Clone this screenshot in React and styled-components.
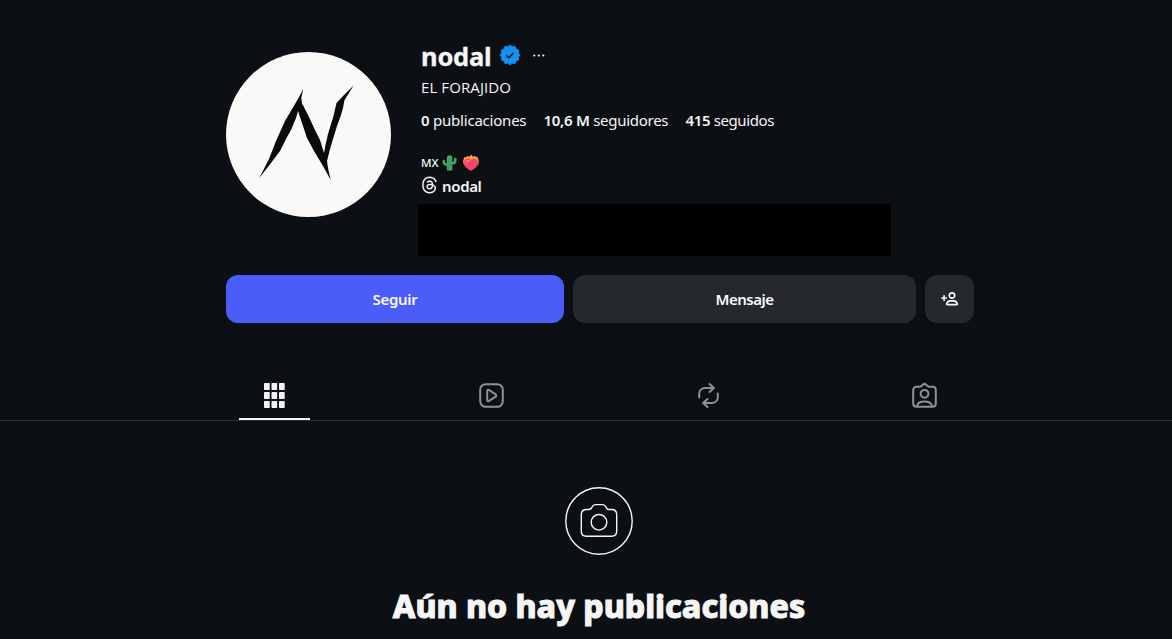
import React from "react";
import styled, { createGlobalStyle } from "styled-components";
import { FaThreads } from "react-icons/fa6";

const GlobalStyle = createGlobalStyle`
  * { box-sizing: border-box; }
  body {
    margin: 0;
    background: #0c1014;
    color: #f5f5f5;
    font-family: "Noto Sans", "Open Sans", sans-serif;
    overflow: hidden;
  }
`;

const Page = styled.main`
  width: 1172px;
  height: 639px;
  overflow: hidden;
`;
const Profile = styled.header`
  display: flex;
  height: 275px;
  padding: 0 0 0 226px;
`;
const Avatar = styled.svg`
  width: 165px;
  height: 165px;
  margin-top: 52px;
  flex: none;
`;
const Info = styled.section`
  margin-left: 27px;
  padding-top: 39px;
  width: 473px;
`;
const Line = styled.div`
  display: flex;
  align-items: center;
  height: ${(p) => p.$h}px;
  margin-top: ${(p) => p.$top || 0}px;
  padding-left: 3px;
  white-space: nowrap;
`;
const Text = styled.span`
  font-size: ${(p) => p.$size || 15}px;
  font-weight: ${(p) => p.$weight || 400};
  letter-spacing: ${(p) => p.$track || 0}px;
  line-height: 1;
`;
const DisplayName = styled(Text)`
  font-family: "Open Sans", sans-serif;
`;
const Username = styled(Text)`
  -webkit-text-stroke: 0.3px currentColor;
`;
const Stat = styled(Text)`
  width: ${(p) => p.$width}px;
  b { font-weight: 600; }
`;
const Icon = styled.svg`
  width: ${(p) => p.$w}px;
  height: ${(p) => p.$h || p.$w}px;
  margin-left: ${(p) => p.$left || 0}px;
  margin-bottom: ${(p) => p.$lift || 0}px;
  flex: none;
  overflow: visible;
`;
const ThreadsMark = styled(FaThreads)`
  width: 17px;
  height: 18px;
  margin: -2px 4px 0 0;
`;
const LinkBlock = styled.div`
  height: 52px;
  margin-top: 7px;
  background: #000;
`;
const Actions = styled.div`
  display: grid;
  grid-template-columns: 338px 343px 49px;
  gap: 9px;
  height: 48px;
  margin-left: 226px;
`;
const Button = styled.button`
  display: flex;
  align-items: center;
  justify-content: center;
  border: 0;
  padding: 0;
  border-radius: 12px;
  color: #f8f9fb;
  font-family: inherit;
  background: ${(p) => (p.$primary ? "#4a5df9" : "#25282d")};
`;
const Tabs = styled.nav`
  display: flex;
  justify-content: center;
  height: 51px;
  margin-top: 47px;
  padding-left: 27px;
  border-bottom: 1px solid #2b3036;
`;
const TabSlot = styled.div`
  display: flex;
  justify-content: center;
  width: 216.6px;
`;
const Tab = styled.div`
  display: flex;
  justify-content: center;
  align-items: center;
  width: 71px;
  height: 50px;
  padding-top: 2px;
  color: ${(p) => (p.$active ? "#f5f5f5" : "#8f9194")};
  border-bottom: 2px solid ${(p) => (p.$active ? "#f5f5f5" : "transparent")};
`;
const Empty = styled.section`
  display: flex;
  flex-direction: column;
  align-items: center;
  padding: 66px 0 0 26px;
`;
const Title = styled.h1`
  margin: 31px 0 0;
  font-size: 32px;
  line-height: 40px;
  font-weight: 800;
  letter-spacing: 0;
  -webkit-text-stroke: 1px currentColor;
  white-space: nowrap;
`;

const badgePoints = Array.from({ length: 24 }, (_, i) => {
  const r = i % 2 ? 8.6 : 10;
  const a = (i * Math.PI) / 12;
  return `${10 + r * Math.sin(a)},${10 - r * Math.cos(a)}`;
}).join(" ");

const line = {
  fill: "none",
  stroke: "currentColor",
  strokeWidth: 2,
  strokeLinecap: "round",
  strokeLinejoin: "round",
};

function ProfilePhoto() {
  return (
    <Avatar viewBox="0 0 165 165">
      <circle cx="82.5" cy="82.5" r="82.5" fill="#faf9f7" />
      <path
        fill="#0b0b0b"
        d="M77.3 37 73 45 69 52 59 69 50 89 43 107 33.3 126 45 111 54 99 60 87 65 78 70 66 72 59 76 71 81 86 88 99 97 114 104.7 128 102 116 101 109 104 97 107 87 111 74 115 63 117 56 118.5 48 123 41 127.5 33.5 118 43 110.5 51 107 66 102 82 99.5 93 98 101 94 88 88.5 77 83 65 76 51.5 75.3 46Z"
      />
      <path d="m76 53 6 14 7 16 6 20M74 52 64 71 53 91m60-37-7 18-4 18-3 16" fill="none" stroke="#0b0b0b" strokeWidth="1.6" />
    </Avatar>
  );
}

function Verified() {
  return (
    <Icon $w={20} $left={8} $lift={4} viewBox="0 0 20 20">
      <polygon points={badgePoints} fill="#1292f5" stroke="#1292f5" strokeLinejoin="round" strokeWidth="0.8" />
      <path d="m6.3 10.4 2.5 2.3 4.8-4.8" fill="none" stroke="#0c1827" strokeWidth="1.5" />
    </Icon>
  );
}

function Cactus() {
  return (
    <Icon $w={15} $h={16} $left={3} viewBox="0 0 15 16">
      <path d="M1.7 6v1c0 2 1 2.5 3 2.5h2M13.3 4v1.5c0 2-1 2.7-3 2.7H8" fill="none" stroke="#43a568" strokeWidth="2.5" strokeLinecap="round" />
      <path d="M4.9 15.5V3a2.7 2.7 0 0 1 5.4 0v12.5Z" fill="#49ab6b" />
      <path d="M6.7 2.5v12.5M8.7 2.5v12.5" stroke="#2c8452" strokeWidth=".5" />
    </Icon>
  );
}

function BurningHeart() {
  return (
    <Icon $w={16} $h={16} $left={6} viewBox="0 0 16 16">
      <path d="M.3 8C-.2 5.500.7 3.500 1.900 1.800L3 2.500 4.600.8 6 2 8.300-.2l1.600 2 2-1 1 1.500 1.200-.7C15.800 4 16.200 7 15.300 9.500L8 15.500 1.500 10.500Z" fill="#ffa23a" />
      <path d="M8 15.600C4.300 13.800 1 11.300 1 7.400 1 3.400 5.800 2.500 8 5c2.200-2.500 7-1.600 7 2.400 0 3.900-3.300 6.400-7 8.200Z" fill="#f4446c" />
      <path d="M3.500 7.200c.3-1.500 1.500-1.900 2.600-1.100" fill="none" stroke="#ff7f99" strokeWidth="1.3" strokeLinecap="round" />
    </Icon>
  );
}

function GridIcon() {
  return (
    <Icon $w={21} $h={25} viewBox="0 0 21 25" fill="currentColor">
      {[0, 9, 18].map((y) => [0, 7.5, 15].map((x) => (
        <rect key={`${x}-${y}`} x={x} y={y} width="5.7" height="7" rx=".7" />
      )))}
    </Icon>
  );
}

export default function App() {
  return (
    <>
      <GlobalStyle />
      <Page>
        <Profile>
          <ProfilePhoto />
          <Info>
            <Line $h={36}>
              <Username $size={25.5} $weight={700} $track={-0.2}>nodal</Username>
              <Verified />
              <Icon $w={12} $h={3} $left={13} $lift={3} viewBox="0 0 12 3" fill="#f5f5f5">
                <circle cx="1.3" cy="1.5" r="1.1" />
                <circle cx="5.8" cy="1.5" r="1.1" />
                <circle cx="10.3" cy="1.5" r="1.1" />
              </Icon>
            </Line>
            <Line $h={24}>
              <DisplayName $size={15} $track={0.1}>EL FORAJIDO</DisplayName>
            </Line>
            <Line $h={24} $top={9}>
              <Stat $width={122.5} $track={-0.22}><b>0</b> publicaciones</Stat>
              <Stat $width={142} $track={-0.28}><b>10,6 M</b> seguidores</Stat>
              <Stat $width={90} $track={-0.38}><b>415</b> seguidos</Stat>
            </Line>
            <Line $h={25} $top={18}>
              <Text $size={11.5} $weight={500}>MX</Text>
              <Cactus />
              <BurningHeart />
            </Line>
            <Line $h={22}>
              <ThreadsMark />
              <Text $size={15} $weight={600} $track={-0.35}>nodal</Text>
            </Line>
            <LinkBlock />
          </Info>
        </Profile>
        <Actions>
          <Button $primary><Text $weight={600} $track={-0.3}>Seguir</Text></Button>
          <Button><Text $weight={600} $track={-0.5}>Mensaje</Text></Button>
          <Button aria-label="Sugerencias">
            <Icon $w={17} $h={14} viewBox="0 0 17 14" {...line} strokeWidth="1.7">
              <circle cx="11" cy="3.5" r="2.7" />
              <path d="M6.5 12.7c-.9 0-.9-1-.5-1.8.7-1.4 1.9-2 3.4-2h3.2c1.5 0 2.7.6 3.4 2 .4.8.4 1.8-.5 1.8ZM.9 6h4.4M3.1 3.800v4.400" />
            </Icon>
          </Button>
        </Actions>
        <Tabs>
          <TabSlot><Tab $active><GridIcon /></Tab></TabSlot>
          <TabSlot>
            <Tab>
              <Icon $w={25} viewBox="0 0 25 25" {...line}>
                <rect x="1.2" y="1.2" width="22.6" height="22.6" rx="5.5" />
                <path d="M8.2 8.2c0-1.2 1-1.7 2-1.1l6.4 4.2c.9.6.9 1.8 0 2.4l-6.4 4.2c-1 .6-2 .1-2-1.1Z" />
              </Icon>
            </Tab>
          </TabSlot>
          <TabSlot>
            <Tab>
              <Icon $w={21} $h={25} $left={1} viewBox="0 0 21 25" {...line}>
                <path d="M1.2 14.5V11c0-3.5 2.3-6 6-6h8.3M11.500 1l4.300 4-4.300 4M19.8 10.500V14c0 3.500-2.300 6-6 6H5.500M9.500 16l-4.300 4 4.300 4" />
              </Icon>
            </Tab>
          </TabSlot>
          <TabSlot>
            <Tab>
              <Icon $w={25} viewBox="0 0 25 25" {...line}>
                <path d="M4.500 3.800h3.200c.7 0 1.200-.3 1.700-.8l1.700-1.500c.8-.7 2-.7 2.800 0L15.600 3c.5.5 1 .8 1.700.8h3.200c1.900 0 3.300 1.400 3.300 3.300v13.400c0 1.900-1.400 3.300-3.300 3.300h-16c-1.900 0-3.300-1.400-3.300-3.300V7.100c0-1.900 1.400-3.300 3.300-3.300Z" />
                <circle cx="12.5" cy="10.8" r="3.9" />
                <path d="M5 23c.7-3 3.200-4.400 7.500-4.400s6.800 1.400 7.500 4.400" />
              </Icon>
            </Tab>
          </TabSlot>
        </Tabs>
        <Empty>
          <Icon $w={68} viewBox="0 0 68 68" {...line} strokeWidth="1.4">
            <circle cx="34" cy="34" r="33.2" />
            <path d="M21.500 22.500h2.700c1.700 0 2-.7 2.700-2.200.8-1.700 1.700-2.700 3.500-2.700h7.200c1.800 0 2.700 1 3.500 2.700.7 1.500 1 2.200 2.700 2.200h2.700c3.100 0 5.200 2 5.200 5.200v16.300c0 3.200-2.100 5.200-5.200 5.200h-25c-3.100 0-5.200-2-5.200-5.200V27.700c0-3.200 2.100-5.200 5.200-5.200Z" />
            <circle cx="34" cy="35.3" r="7.8" />
          </Icon>
          <Title>Aún no hay publicaciones</Title>
        </Empty>
      </Page>
    </>
  );
}
